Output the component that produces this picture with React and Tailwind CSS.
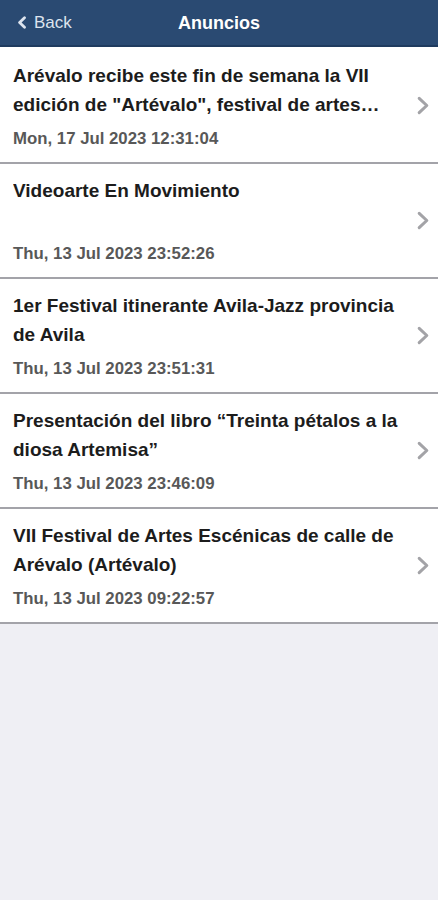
import React from "react";

const items = [
  {
    title: 'Arévalo recibe este fin de semana la VII edición de "Artévalo", festival de artes escénicas de calle',
    date: "Mon, 17 Jul 2023 12:31:04",
  },
  { title: "Videoarte En Movimiento", date: "Thu, 13 Jul 2023 23:52:26" },
  {
    title: "1er Festival itinerante Avila-Jazz provincia de Avila",
    date: "Thu, 13 Jul 2023 23:51:31",
  },
  {
    title: "Presentación del libro “Treinta pétalos a la diosa Artemisa”",
    date: "Thu, 13 Jul 2023 23:46:09",
  },
  {
    title: "VII Festival de Artes Escénicas de calle de Arévalo (Artévalo)",
    date: "Thu, 13 Jul 2023 09:22:57",
  },
];

const Chevron = ({ className }) => (
  <svg viewBox="0 0 14 20" className={className} fill="none">
    <path d="M3 2.5 L11 10 L3 17.5" stroke="currentColor" strokeWidth="3.2" strokeLinecap="round" strokeLinejoin="round" />
  </svg>
);

const App = () => {
  return (
    <div
      className="min-h-[900px] bg-[#efeff4]"
      style={{ fontFamily: '"Liberation Sans", Arial, sans-serif' }}
    >
      <div className="relative flex h-[47px] items-center justify-center border-b-2 border-[#1f3b5f] bg-[#2a4a72]">
        <div className="absolute left-[17px] top-0 flex h-full items-center gap-[7px] text-[#dde4ee]">
          <svg viewBox="0 0 10 13" className="h-[13px] w-[10px]" fill="none">
            <path d="M7.5 1.8 L2.6 6.5 L7.5 11.2" stroke="currentColor" strokeWidth="2.8" strokeLinecap="round" strokeLinejoin="round" />
          </svg>
          <span className="text-[17px] leading-none">Back</span>
        </div>
        <h1 className="text-[18px] font-bold leading-none text-white">Anuncios</h1>
      </div>

      <ul className="bg-white pt-[2px]">
        {items.map((item, i) => (
          <li
            key={i}
            className="flex h-[115px] items-center border-b-2 border-[#a3a3a9] pl-[13px] pr-[8px]"
          >
            <div className="flex h-full min-w-0 flex-1 flex-col justify-between pb-[13px] pt-[12px]">
              <p className="line-clamp-2 pr-[12px] text-[19px] font-bold leading-[29px] text-[#1c1c1c]">
                {item.title}
              </p>
              <p className="text-[16.8px] font-bold leading-[20px] text-[#585858]">
                {item.date}
              </p>
            </div>
            <Chevron className="h-[19px] w-[14px] shrink-0 text-[#a3a3a7]" />
          </li>
        ))}
      </ul>
    </div>
  );
};

export default App;
